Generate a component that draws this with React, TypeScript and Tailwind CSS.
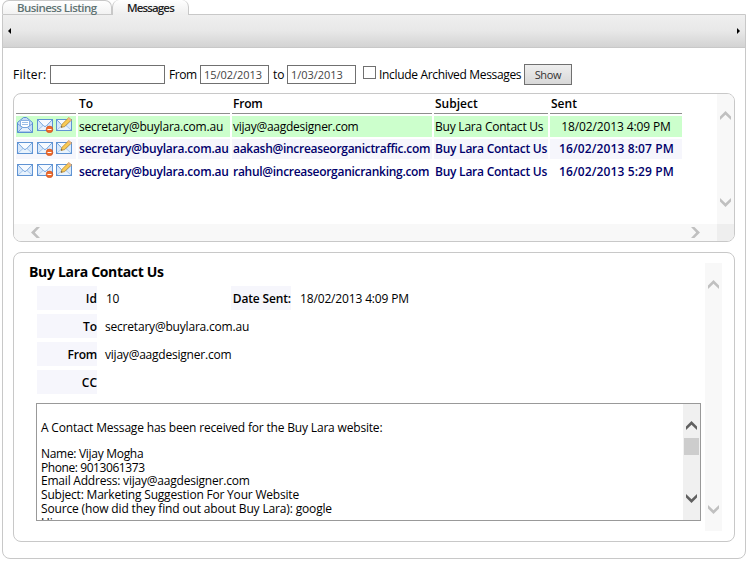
import React from "react";

type Dir = "up" | "down" | "left" | "right";

const chevrons: Record<Dir, string> = {
  up: "M0 9V5.6L5.5 0 11 5.6V9L5.5 3.8Z",
  down: "M0 0V3.4L5.5 9 11 3.4V0L5.5 5.2Z",
  left: "M9 0H5.6L0 5.5 5.6 11H9L3.8 5.5Z",
  right: "M0 0H3.4L9 5.5 3.4 11H0L5.2 5.5Z",
};

function Chevron({ dir, className }: { dir: Dir; className: string }) {
  const upright = dir === "up" || dir === "down";
  const w = upright ? 11 : 9;
  const h = upright ? 9 : 11;
  return (
    <svg width={w} height={h} viewBox={`0 0 ${w} ${h}`} className={`block shrink-0 ${className}`}>
      <path d={chevrons[dir]} fill="currentColor" />
    </svg>
  );
}

function Envelope() {
  return (
    <>
      <rect x="0.5" y="0.5" width="15" height="11" fill="#d9e9fb" stroke="#5f93d3" />
      <path d="M1 11L6 6.5H10L15 11" stroke="#a5c6eb" fill="#e9f3fd" />
      <path d="M1 1L7 7.3H9L15 1" stroke="#78a6de" fill="#f6faff" />
      <rect x="0.5" y="0.5" width="15" height="11" fill="none" stroke="#5f93d3" />
    </>
  );
}

function MailIcon() {
  return (
    <svg width="16" height="12" viewBox="0 0 16 12" className="block">
      <Envelope />
    </svg>
  );
}

function OpenMailIcon() {
  return (
    <svg width="16" height="16" viewBox="0 0 16 16" className="block">
      <path d="M0.5 5.5L6.5 0.5H9.5L15.5 5.5V15.5H0.5Z" fill="#c3daf5" stroke="#5b90d2" />
      <path d="M3.5 9V3.5H12.5V9L10 10.5H6Z" fill="#fff" stroke="#8ab2e2" />
      <path d="M5 5.5H11M5 7.5H11" stroke="#9cbfe8" />
      <path d="M1 7L5.5 10.5M15 7L10.5 10.5" stroke="#74a3dc" />
      <path d="M1 15L5.5 10.5H10.5L15 15Z" fill="#e4f0fc" stroke="#74a3dc" />
      <path d="M0.5 15.5H15.5" stroke="#5b90d2" />
    </svg>
  );
}

function DeleteMailIcon() {
  return (
    <svg width="17" height="14" viewBox="0 0 17 14" className="block">
      <Envelope />
      <circle cx="12.5" cy="10.4" r="3.3" fill="#ee6b2c" stroke="#cf4d18" strokeWidth="0.6" />
      <path d="M10.5 10.5H14.5" stroke="#fff" strokeWidth="1.2" />
    </svg>
  );
}

function EditMailIcon() {
  return (
    <svg width="17" height="14" viewBox="0 0 17 14" className="block">
      <g transform="translate(0 2)">
        <Envelope />
      </g>
      <path d="M5 10.5L6 7.3 12.8 0.6 15.5 3 8.5 9.6Z" fill="#f8ca55" stroke="#bd8b35" strokeWidth="0.8" />
      <path d="M12.8 0.6L15.5 3 14.3 4.1 11.7 1.7Z" fill="#eeb08c" />
      <path d="M5 10.5L5.5 8.9 6.5 9.9Z" fill="#444" />
    </svg>
  );
}

const rows = [
  { to: "secretary@buylara.com.au", from: "vijay@aagdesigner.com", sent: "18/02/2013 4:09 PM", open: true },
  { to: "secretary@buylara.com.au", from: "aakash@increaseorganictraffic.com", sent: "16/02/2013 8:07 PM", open: false },
  { to: "secretary@buylara.com.au", from: "rahul@increaseorganicranking.com", sent: "16/02/2013 5:29 PM", open: false },
];

const rowStyles = [
  "mt-[2px] h-[21px] [&>*]:bg-[#ccffcc]",
  "mt-[2px] h-5 [&>*]:bg-[#f6f6fc] text-[#00006b] font-semibold",
  "mt-[2px] h-[22px] text-[#00006b] font-semibold",
];

const columns = "grid grid-cols-[60px_152px_200px_114px_132px] gap-x-[2px]";

function Label({ children, className = "" }: { children: React.ReactNode; className?: string }) {
  return (
    <div className={`flex h-6 w-[60px] shrink-0 items-center justify-end bg-[#f6f6fc] pt-[2px] font-semibold ${className}`}>
      {children}
    </div>
  );
}

export default function App() {
  return (
    <div className="h-[561px] w-[750px] overflow-hidden bg-white pl-[2px] font-['Open_Sans','Noto_Sans',sans-serif] text-[12px] leading-[14px] whitespace-nowrap text-black">
      <div className="flex h-[14px]">
        <div className="h-[14px] w-[110px] rounded-t-[7px] border-x border-t border-[#c8c8c8] bg-gradient-to-b from-white to-[#f2f2f2] pl-[14px] text-[11.5px] leading-[13px] font-semibold tracking-[-0.55px] text-[#5f7373]">
          Business Listing
        </div>
        <div className="relative z-10 h-[15px] w-[77px] rounded-t-[7px] border-x border-[#c8c8c8] bg-gradient-to-b from-white to-[#eeeeee] pl-[14px] text-[11.5px] leading-[15px] font-semibold tracking-[-0.85px] text-[#222]">
          Messages
        </div>
      </div>

      <div className="h-[545px] w-[744px] rounded-b-[8px] border border-[#c8c8c8]">
        <div className="flex h-[33px] items-center justify-between border-b border-[#c8c8c8] bg-gradient-to-b from-[#efefef] via-[#e8e8e8] to-[#d3d3d3] pr-[5px] pl-[5px]">
          <svg width="3" height="6" viewBox="0 0 3 6"><path d="M3 0V6L0 3Z" /></svg>
          <svg width="3" height="6" viewBox="0 0 3 6"><path d="M0 0V6L3 3Z" /></svg>
        </div>

        <div className="flex h-[45px] pt-4 pl-[10px]">
          <span className="w-[37px] pt-1 tracking-[0.3px]">Filter:</span>
          <div className="mt-px h-[19px] w-[115px] border border-[#707070]" />
          <span className="ml-1 w-[31px] pt-1 tracking-[-0.4px]">From</span>
          <div className="mt-px h-[19px] w-[69px] border border-[#707070] pt-[2px] pl-[3px] text-[11px] tracking-[-0.05px] text-[#444]">15/02/2013</div>
          <span className="ml-1 w-[14px] pt-1">to</span>
          <div className="mt-px h-[19px] w-[69px] border border-[#707070] pt-[2px] pl-[3px] text-[11px] tracking-[-0.05px] text-[#444]">1/03/2013</div>
          <div className="mt-[2px] ml-[7px] h-[13px] w-[13px] border border-[#707070]" />
          <span className="ml-[3px] w-[145px] pt-1 tracking-[-0.33px]">Include Archived Messages</span>
          <div className="h-[21px] w-[48px] border border-[#707070] bg-gradient-to-b from-[#eeeeee] to-[#d8d8d8] pt-[3px] text-center text-[11px] tracking-[-0.3px] text-[#333]">Show</div>
        </div>

        <div className="ml-[10px] flex h-[149px] w-[722px] flex-col overflow-hidden rounded-[8px] border border-[#c8c8c8]">
          <div className="flex h-[130px]">
            <div className="w-[703px] pl-[2px]">
              <div className={`${columns} h-5 font-semibold [&>*]:border-b [&>*]:border-[#8e8e8e] [&>*]:pt-[3px] [&>*]:pl-px`}>
                <span />
                <span>To</span>
                <span className="tracking-[-0.2px]">From</span>
                <span>Subject</span>
                <span>Sent</span>
              </div>
              {rows.map((r, i) => (
                <div key={i} className={`${columns} ${rowStyles[i]}`}>
                  <div className="flex gap-[3px] pt-[3px] pl-px">
                    {r.open ? <div className="-mt-[2px] w-[17px]"><OpenMailIcon /></div> : <div className="w-[17px]"><MailIcon /></div>}
                    <div className="w-4"><DeleteMailIcon /></div>
                    <div className="-mt-[2px] w-4"><EditMailIcon /></div>
                  </div>
                  <span className={`flex items-center pl-px ${r.open ? "tracking-[-0.2px]" : "tracking-[-0.21px]"}`}>{r.to}</span>
                  <span className={`flex items-center pl-px ${r.open ? "tracking-[-0.26px]" : "tracking-[-0.29px]"}`}>{r.from}</span>
                  <span className={`flex items-center pl-px ${r.open ? "tracking-[-0.22px]" : "tracking-[-0.24px]"}`}>Buy Lara Contact Us</span>
                  <span className={`flex items-center justify-center ${r.open ? "tracking-[-0.12px]" : "pl-px tracking-[0.11px]"}`}>{r.sent}</span>
                </div>
              ))}
            </div>
            <div className="flex w-[17px] flex-col items-center justify-between bg-[#f8f8f8] pt-[17px] pb-[17px] text-[#c0c0c0]">
              <Chevron dir="up" className="" />
              <Chevron dir="down" className="" />
            </div>
          </div>
          <div className="flex h-[17px]">
            <div className="flex w-[703px] items-center justify-between bg-[#f8f8f8] px-[17px] text-[#c0c0c0]">
              <Chevron dir="left" className="" />
              <Chevron dir="right" className="" />
            </div>
            <div className="w-[17px] bg-[#eeeeee]" />
          </div>
        </div>

        <div className="mt-[10px] ml-[10px] flex h-[290px] w-[722px] rounded-[8px] border border-[#c8c8c8]">
          <div className="w-[691px] pl-[15px]">
            <h2 className="h-[33px] pt-[11px] text-[14px] leading-4 font-bold tracking-[-0.32px]">Buy Lara Contact Us</h2>
            <div className="flex flex-col gap-1 pl-2 [&_span]:pt-[2px]">
              <div className="flex items-center">
                <Label>Id</Label>
                <span className="w-[134px] pl-[9px] tracking-[-0.3px]">10</span>
                <Label className="tracking-[-0.15px]">Date Sent:</Label>
                <span className="pl-[9px] tracking-[-0.15px]">18/02/2013 4:09 PM</span>
              </div>
              <div className="flex items-center">
                <Label>To</Label>
                <span className="pl-2 tracking-[-0.2px]">secretary@buylara.com.au</span>
              </div>
              <div className="flex items-center">
                <Label className="tracking-[-0.2px]">From</Label>
                <span className="pl-2 tracking-[-0.22px]">vijay@aagdesigner.com</span>
              </div>
              <div className="flex items-center">
                <Label>CC</Label>
              </div>
            </div>
            <div className="mt-[9px] ml-[7px] flex h-[118px] w-[665px] border border-[#999]">
              <div className="w-[646px] overflow-hidden pt-[17px] pl-1 leading-[13.75px]">
                <p className="mb-[12px] tracking-[-0.18px]">A Contact Message has been received for the Buy Lara website:</p>
                <p className="tracking-[-0.3px]">Name: Vijay Mogha</p>
                <p className="tracking-[-0.42px]">Phone: 9013061373</p>
                <p className="tracking-[-0.21px]">Email Address: vijay@aagdesigner.com</p>
                <p className="tracking-[-0.2px]">Subject: Marketing Suggestion For Your Website</p>
                <p className="tracking-[-0.155px]">Source (how did they find out about Buy Lara): google</p>
                <p>Hi,</p>
              </div>
              <div className="flex w-[17px] flex-col items-center bg-[#f0f0f0] text-[#606060]">
                <Chevron dir="up" className="mt-[17px]" />
                <div className="mt-2 h-[17px] w-[15px] bg-[#cdcdcd]" />
                <Chevron dir="down" className="mt-[39px]" />
              </div>
            </div>
          </div>
          <div className="mt-[10px] flex h-[268px] w-[17px] flex-col items-center justify-between bg-[#f8f8f8] py-[17px] text-[#c0c0c0]">
            <Chevron dir="up" className="" />
            <Chevron dir="down" className="" />
          </div>
        </div>
      </div>
    </div>
  );
}
